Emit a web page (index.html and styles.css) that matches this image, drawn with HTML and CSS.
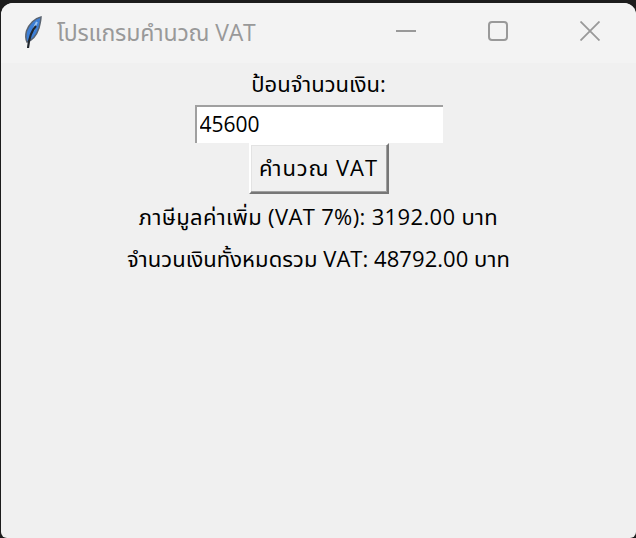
FILE: index.html
```html
<!DOCTYPE html>
<html lang="th">
<head>
<meta charset="utf-8">
<title>โปรแกรมคำนวณ VAT</title>
<link rel="stylesheet" href="styles.css">
</head>
<body>
<div class="window">
  <header class="titlebar">
    <svg class="app-icon" width="20" height="34" viewBox="0 0 20 34" aria-hidden="true">
      <path d="M18 1C12 2 6 8 3.500 15C2.500 19 2.500 23 4 26C10 24 14 18 16 12C17 8 18 4 18 1Z" fill="#3d7fd6" stroke="#5b6470" stroke-width="1.500"/>
      <path d="M14 6C12 9 11 12 10 15" fill="none" stroke="#9cc4f0" stroke-width="2"/>
      <path d="M13 10C8 15 6 22 5 32" fill="none" stroke="#20262e" stroke-width="2.200"/>
    </svg>
    <span class="title">โปรแกรมคำนวณ VAT</span>
    <div class="controls">
      <svg width="20" height="20" viewBox="0 0 20 20" aria-hidden="true"><path d="M0 10H20" stroke="#999" stroke-width="2"/></svg>
      <svg width="20" height="20" viewBox="0 0 20 20" aria-hidden="true"><rect x="1" y="1" width="18" height="18" rx="3" fill="none" stroke="#999" stroke-width="2"/></svg>
      <svg width="20" height="20" viewBox="0 0 20 20" aria-hidden="true"><path d="M0.500 0.500L19.500 19.500M19.500 0.500L0.500 19.500" stroke="#999" stroke-width="1.800"/></svg>
    </div>
  </header>
  <main class="content">
    <div class="label first">ป้อนจำนวนเงิน:</div>
    <input class="entry" type="text" value="45600">
    <button class="calc" type="button">คำนวณ VAT</button>
    <div class="label tax">ภาษีมูลค่าเพิ่ม (VAT 7%): 3192.00 บาท</div>
    <div class="label total">จำนวนเงินทั้งหมดรวม VAT: 48792.00 บาท</div>
  </main>
</div>
</body>
</html>
```
FILE: styles.css
```css
html, body {
  margin: 0;
  height: 100%;
  background: #1c1c1c;
  overflow: hidden;
}
body {
  padding-top: 3px;
  box-sizing: border-box;
}
.window {
  height: 535px;
  margin: 0 0 0 1px;
  border-radius: 12px 12px 6px 6px;
  background: #f0f0f0;
  overflow: hidden;
  display: flex;
  flex-direction: column;
  font-family: "Open Sans", "Noto Sans", "Noto Sans Thai", "DejaVu Sans", sans-serif;
  color: #000;
}
.titlebar {
  height: 60px;
  flex: none;
  background: #f3f3f3;
  display: flex;
  align-items: center;
  box-sizing: border-box;
  padding-left: 22px;
}
.app-icon { flex: none; }
.title {
  margin-left: 14px;
  font-size: 23px;
  letter-spacing: -0.15px;
  color: #999;
  white-space: nowrap;
}
.controls {
  margin-left: auto;
  width: 240px;
  margin-bottom: 4px;
  padding-right: 36px;
  box-sizing: border-box;
  display: flex;
  justify-content: space-between;
  align-items: center;
}
.content {
  flex: 1;
  display: flex;
  flex-direction: column;
  align-items: center;
}
.label {
  font-size: 22px;
  line-height: 28px;
  white-space: nowrap;
}
.first { margin-top: 6px; }
.entry {
  width: 248px;
  height: 38px;
  margin: 8px 0 0;
  padding: 0 2px 3px 3px;
  box-sizing: border-box;
  border: 0;
  border-top: 2px solid #a0a0a0;
  border-left: 2px solid #a0a0a0;
  background: #fff;
  font: 21px "Open Sans", "Noto Sans", sans-serif;
  color: #000;
  outline: none;
}
.calc {
  width: 140px;
  height: 51px;
  margin: 0;
  padding: 0;
  box-sizing: border-box;
  border: 2px solid;
  border-color: #fff #777 #777 #fff;
  box-shadow: inset -1px -1px 0 #a0a0a0, inset 1px 1px 0 #e3e3e3;
  background: #f0f0f0;
  font: 22px "Open Sans", "Noto Sans", "Noto Sans Thai", "DejaVu Sans", sans-serif;
  letter-spacing: 0.9px;
  color: #000;
}
.tax {
  margin-top: 8px;
  letter-spacing: 0.35px;
}
.total {
  margin-top: 14px;
  letter-spacing: 0.05px;
}
```
